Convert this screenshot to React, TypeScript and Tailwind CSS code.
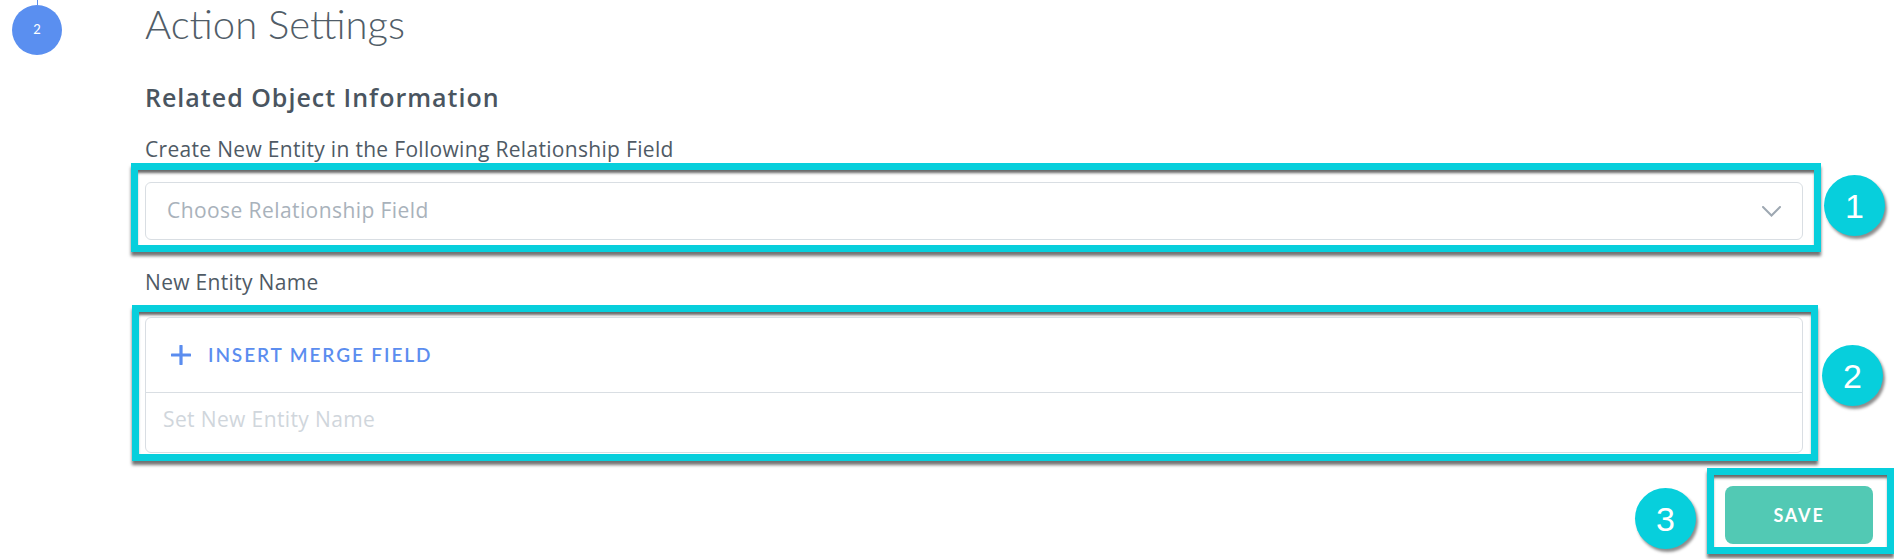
function Badge({ n, className }: { n: number; className: string }) {
  return (
    <div
      className={
        "flex h-[61px] w-[61px] shrink-0 items-center justify-center rounded-full bg-[#07cfdc] font-['Liberation_Sans',Arial,sans-serif] text-[34px] leading-none text-white shadow-[2px_3px_3px_rgba(0,0,0,0.45)] " +
        className
      }
    >
      {n}
    </div>
  );
}

const callout =
  "border-[7px] border-[#07cfdc] shadow-[inset_0_4px_3px_-1px_rgba(0,0,0,0.6),0_4px_3px_rgba(0,0,0,0.55)]";

const sans = "font-['Open_Sans',sans-serif]";

export default function App() {
  return (
    <div className="flex h-[559px] w-full overflow-hidden bg-white font-['Lato',sans-serif]">
      <aside className="flex w-[145px] shrink-0 flex-col pl-[12px]">
        <div className="flex w-[50px] flex-col items-center">
          <div className="h-[5px] w-px bg-[#5a8ff0]" />
          <div className="flex h-[50px] w-[50px] items-center justify-center rounded-full bg-[#5a8ff0] text-[13px] text-white">
            2
          </div>
        </div>
      </aside>

      <main className="flex min-w-0 flex-1 flex-col pr-[92px]">
        <h1 className="text-[40px] font-light leading-[48px] text-[#515d68]">Action Settings</h1>
        <h2 className={sans + " mt-[34px] text-[25px] font-semibold leading-[30px] tracking-[0.04em] text-[#4a5560]"}>
          Related Object Information
        </h2>

        <label className={sans + " mt-[25px] text-[21px] leading-[24px] tracking-[0.015em] text-[#4f5a65]"}>
          Create New Entity in the Following Relationship Field
        </label>
        <div className="mt-[2px] ml-[-14px] mr-[-83px] flex items-start gap-[3px]">
          <div className={"flex-1 pt-[12px] pr-[11px] pb-[5px] pl-[7px] " + callout}>
            <div
              className={
                sans +
                " flex h-[58px] w-full items-center justify-between rounded-[6px] border border-[#d9dee3] bg-white pl-[21px] pr-[21px] text-[21px] tracking-[0.02em] text-[#a9b2bb]"
              }
            >
              <span>Choose Relationship Field</span>
              <svg width="19" height="11" viewBox="0 0 19 11" fill="none">
                <path d="M1 1l8.5 8.5L18 1" stroke="#9ea8b2" strokeWidth="2" strokeLinecap="round" />
              </svg>
            </div>
          </div>
          <Badge n={1} className="mt-[12px]" />
        </div>

        <label className={sans + " mt-[18px] text-[21px] leading-[24px] tracking-[0.015em] text-[#4f5a65]"}>
          New Entity Name
        </label>
        <div className="mt-[11px] ml-[-13px] mr-[-81px] flex items-start gap-[4px]">
          <div className={"flex-1 pt-[5px] pr-[8px] pb-[1px] pl-[6px] " + callout}>
            <div className="flex flex-col rounded-[6px] border border-[#d9dee3] bg-white">
              <div className="flex h-[75px] items-center gap-[17px] border-b border-[#d9dee3] pl-[25px]">
                <svg width="20" height="20" viewBox="0 0 20 20" fill="none">
                  <path d="M10 1v18M1 10h18" stroke="#5b8def" strokeWidth="3.2" strokeLinecap="round" />
                </svg>
                <span className="text-[19px] font-semibold tracking-[0.1em] text-[#5b8def]">INSERT MERGE FIELD</span>
              </div>
              <div
                className={
                  sans + " flex h-[59px] items-center pb-[6px] pl-[17px] text-[21px] tracking-[0.018em] text-[#d0d6dc]"
                }
              >
                Set New Entity Name
              </div>
            </div>
          </div>
          <Badge n={2} className="mt-[40px]" />
        </div>

        <div className="mt-[7px] mr-[-92px] flex items-start justify-end gap-[11px]">
          <Badge n={3} className="mt-[20px]" />
          <div className={"pt-[11px] pr-[14px] pb-[3px] pl-[11px] " + callout}>
            <button className="flex h-[58px] w-[148px] items-center justify-center rounded-[8px] bg-[#52c9b4] text-[18px] font-bold tracking-[0.1em] text-white">
              SAVE
            </button>
          </div>
        </div>
      </main>
    </div>
  );
}
